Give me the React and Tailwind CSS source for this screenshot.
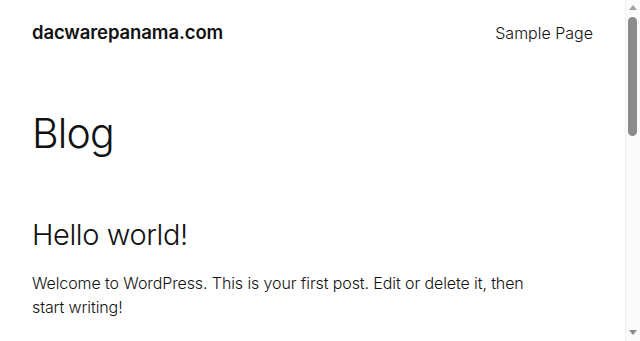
import React from 'react';

const FONT = "font-['Inter','Noto_Sans',sans-serif]";

// fake browser scrollbar, sits over the right edge of the page
const Scrollbar = () => (
    <div className="absolute top-0 right-0 w-[15px] h-[341px] bg-[#fbfbfb] border-l border-[#f0f0f0]">
        <svg className="absolute left-[3px] top-[5px]" width="8" height="5" viewBox="0 0 8 5">
            <path d="M4 0 L8 5 L0 5 Z" fill="#a3a3a3" />
        </svg>
        <div className="absolute left-[2px] top-[17px] w-[9px] h-[119px] rounded-full bg-[#8c8c8c]" />
        <svg className="absolute left-[3px] bottom-[6px]" width="8" height="5" viewBox="0 0 8 5">
            <path d="M0 0 L8 0 L4 5 Z" fill="#8c8c8c" />
        </svg>
    </div>
);

export default function App() {
    return (
        <div className={`${FONT} relative bg-white text-[#111111] h-[341px] overflow-hidden`}>
            <div className="w-[625px] px-8">
                {/* header */}
                <header className="flex items-center justify-between h-[66px]">
                    <a className="text-[18.5px] font-semibold tracking-[-0.1px]">dacwarepanama.com</a>
                    <nav className="text-[16px] font-light">Sample Page</nav>
                </header>

                {/* page title */}
                <h1 className="mt-[43px] text-[41px] font-light leading-[1.2] tracking-[-0.8px]">Blog</h1>

                {/* posts */}
                <article className="mt-[60px]">
                    <h2 className="text-[29px] font-light leading-[1.2] tracking-[-0.4px]">Hello world!</h2>
                    <p className="mt-[18px] max-w-[520px] text-[16px] font-light leading-[24px] tracking-[-0.1px]">
                        Welcome to WordPress. This is your first post. Edit or delete it, then start writing!
                    </p>
                </article>
            </div>
            <Scrollbar />
        </div>
    );
}
